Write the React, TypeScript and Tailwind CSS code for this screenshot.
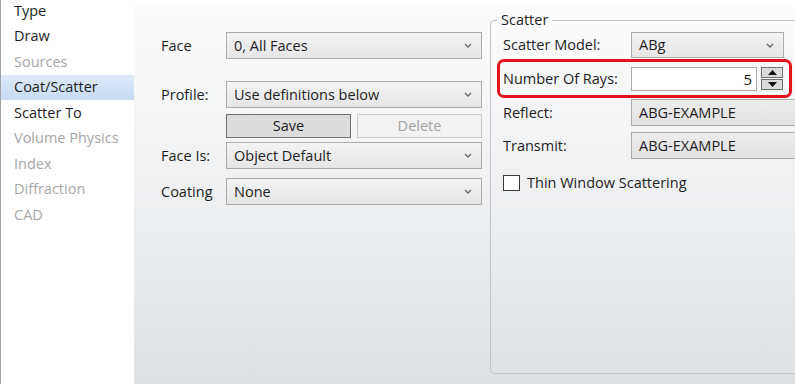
import React from "react";

type NavItem = {
  label: string;
  disabled?: boolean;
  active?: boolean;
};

const navItems: NavItem[] = [
  { label: "Type" },
  { label: "Draw" },
  { label: "Sources", disabled: true },
  { label: "Coat/Scatter", active: true },
  { label: "Scatter To" },
  { label: "Volume Physics", disabled: true },
  { label: "Index", disabled: true },
  { label: "Diffraction", disabled: true },
  { label: "CAD", disabled: true },
];

function Chevron() {
  return (
    <svg width="8" height="5" viewBox="0 0 8 5" className="shrink-0">
      <path d="M1 1 L4 4 L7 1" fill="none" stroke="#6a6a6a" strokeWidth="1.4" />
    </svg>
  );
}

function Dropdown({ value, className = "" }: { value: string; className?: string }) {
  return (
    <div
      className={
        "flex items-center justify-between border border-[#acacac] bg-gradient-to-b from-[#f3f3f3] to-[#e6e6e6] pl-[7px] pr-[9px] " +
        className
      }
    >
      <span className="whitespace-nowrap leading-[20px]">{value}</span>
      <Chevron />
    </div>
  );
}

function FormRow({
  label,
  children,
  className = "",
}: {
  label?: string;
  children: React.ReactNode;
  className?: string;
}) {
  return (
    <div className={"flex items-center " + className}>
      <span className="w-[65px] shrink-0 leading-[20px]">{label}</span>
      {children}
    </div>
  );
}

export default function App() {
  return (
    <div className="flex h-[384px] w-[795px] overflow-hidden bg-white font-['Open_Sans',sans-serif] text-[14.5px] leading-[20px] text-[#1e1e1e]">
      {/* Lista lateral */}
      <nav className="flex w-[134px] shrink-0 flex-col border-l border-[#a3a3a3]">
        <div className="-mt-[2px] flex flex-col">
          {navItems.map((item) => (
            <div
              key={item.label}
              className={
                "flex h-[25.5px] items-center pl-[13px] " +
                (item.active ? "bg-gradient-to-b from-[#dde9f8] to-[#c8dbf4] " : "") +
                (item.disabled ? "text-[#a6a6a6]" : "text-[#1e1e1e]")
              }
            >
              {item.label}
            </div>
          ))}
        </div>
      </nav>

      {/* Panel principal */}
      <main className="mt-[4px] flex flex-1 bg-gradient-to-b from-[#fcfcfc] via-[#eef0f2] to-[#dee1e4]">
        <section className="flex w-[356px] shrink-0 flex-col pl-[27px] pt-[28px]">
          <FormRow label="Face" className="h-[27px]">
            <Dropdown value="0, All Faces" className="h-[27px] w-[256px]" />
          </FormRow>
          <FormRow label="Profile:" className="mt-[22px] h-[27px]">
            <Dropdown value="Use definitions below" className="h-[27px] w-[256px]" />
          </FormRow>
          <FormRow className="mt-[6px] h-[24px]">
            <div className="flex w-[256px] gap-[6px]">
              <button className="h-[24px] w-[125px] border border-[#707070] bg-[#dcdcdc] text-[#1e1e1e]">
                Save
              </button>
              <button className="h-[24px] flex-1 border border-[#cacaca] bg-[#f2f2f2] text-[#a3a3a3]">
                Delete
              </button>
            </div>
          </FormRow>
          <FormRow label="Face Is:" className="mt-[4px] h-[27px]">
            <Dropdown value="Object Default" className="h-[27px] w-[256px]" />
          </FormRow>
          <FormRow label="Coating" className="mt-[9px] h-[27px]">
            <Dropdown value="None" className="h-[27px] w-[256px]" />
          </FormRow>
        </section>

        {/* Grupo Scatter */}
        <fieldset className="mb-[10px] mt-[6px] w-[330px] shrink-0 rounded-[4px] border border-[#c3c5c8] pl-[12px] pt-[2px]">
          <legend className="ml-[-6px] px-[4px] leading-[20px]">Scatter</legend>
          <div className="flex flex-col items-start">
            <div className="flex h-[26px] items-center">
              <span className="w-[128px]">Scatter Model:</span>
              <Dropdown value="ABg" className="h-[26px] w-[153px]" />
            </div>

            <div className="-ml-[6px] mt-[1px] flex h-[39px] items-center rounded-[7px] border-[3px] border-[#e5121c] pl-[3px] pr-[6px]">
              <span className="w-[128px]">Number Of Rays:</span>
              <div className="flex h-[24px] w-[126px] items-center justify-end border border-[#acacac] bg-white pr-[4px] text-[15px]">
                5
              </div>
              <div className="ml-[4px] flex h-[23px] w-[22px] flex-col gap-px">
                <div className="flex flex-1 items-center justify-center border border-[#6e6e6e] bg-[#dadada]">
                  <svg width="9" height="5" viewBox="0 0 9 5">
                    <path d="M0 5 L4.5 0 L9 5 Z" fill="#111" />
                  </svg>
                </div>
                <div className="flex flex-1 items-center justify-center border border-[#6e6e6e] bg-[#dadada]">
                  <svg width="9" height="5" viewBox="0 0 9 5">
                    <path d="M0 0 L4.5 5 L9 0 Z" fill="#111" />
                  </svg>
                </div>
              </div>
            </div>

            <div className="mt-[1px] flex h-[27px] items-center">
              <span className="w-[128px]">Reflect:</span>
              <div className="flex h-[27px] w-[190px] items-center border border-[#acacac] bg-gradient-to-b from-[#ececec] to-[#e3e3e3] pl-[7px]">
                ABG-EXAMPLE
              </div>
            </div>

            <div className="mt-[6px] flex h-[27px] items-center">
              <span className="w-[128px]">Transmit:</span>
              <div className="flex h-[27px] w-[190px] items-center border border-[#acacac] bg-gradient-to-b from-[#ececec] to-[#e3e3e3] pl-[7px]">
                ABG-EXAMPLE
              </div>
            </div>

            <label className="mt-[14px] flex items-center gap-[7px]">
              <span className="h-[16px] w-[17px] border border-[#3c3c3c] bg-white" />
              <span>Thin Window Scattering</span>
            </label>
          </div>
        </fieldset>
      </main>
    </div>
  );
}
